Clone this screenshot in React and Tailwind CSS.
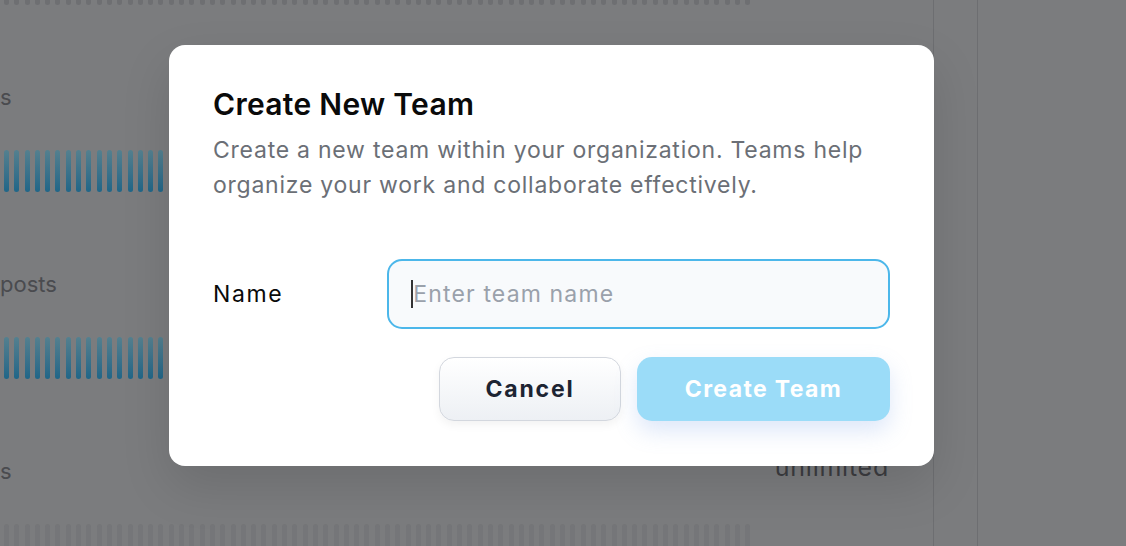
import React from 'react';

const BAR_COUNT = 75;

const BarRow = ({ tone }) => {
  const bars = Array.from({ length: BAR_COUNT });
  const barClass =
    tone === 'blue'
      ? 'w-[5px] shrink-0 rounded-full bg-gradient-to-b from-[#54808f] to-[#1f6688]'
      : tone === 'dark'
        ? 'w-[5px] shrink-0 rounded-full bg-[#6e6f72]'
        : 'w-[5px] shrink-0 rounded-full bg-[#757679]';
  return (
    <div className="flex h-[42px] w-[752px] shrink-0 gap-[5.3px] overflow-hidden pl-[4px]">
      {bars.map((_, i) => (
        <div key={i} className={barClass} />
      ))}
    </div>
  );
};

const UsageSection = ({ label, value, tone }) => (
  <div className="flex shrink-0 flex-col">
    <div className="flex h-[145px] w-[889px] shrink-0 items-center justify-between pt-[40px] text-[22px]">
      <span className="text-[#4a4b4f]">{label}</span>
      {value && (
        <span className="mb-[8px] text-[25px] tracking-[0.03em] text-[#3c3d41]">{value}</span>
      )}
    </div>
    <BarRow tone={tone} />
  </div>
);

export default function App() {
  return (
    <div
      className="relative h-[546px] w-[1126px] overflow-hidden bg-[#7b7c7e]"
      style={{ fontFamily: 'Inter, "Liberation Sans", sans-serif' }}
    >
      {/* page behind the modal */}
      <div className="flex h-full">
        <div className="-mt-[37px] flex w-[933px] shrink-0 flex-col">
          <BarRow tone="dark" />
          <UsageSection label="s" tone="blue" />
          <UsageSection label="posts" tone="blue" />
          <UsageSection label="s" value="unlimited" tone="gray" />
        </div>
        <div className="w-[44px] border-l border-[#6d6e71]" />
        <div className="flex-1 border-l border-[#6d6e71]" />
      </div>

      {/* modal */}
      <div className="absolute inset-0 pl-[169px] pt-[45px]">
        <div className="w-[765px] rounded-[16px] bg-white px-[44px] pt-[40px] pb-[45px] shadow-[0_20px_50px_rgba(0,0,0,0.12)]">
          <h2 className="text-[30px] font-semibold leading-[38px] tracking-[0.01em] text-[#0a0a0a]">
            Create New Team
          </h2>
          <p className="mt-[10px] text-[23px] leading-[35px] tracking-[0.033em] text-[#6b6f76]">
            Create a new team within your organization. Teams help organize your work and
            collaborate effectively.
          </p>

          <div className="mt-[56px] grid grid-cols-4 items-center gap-5">
            <label className="text-[23px] tracking-[0.07em] text-[#0a0a0a]">Name</label>
            <div className="col-span-3 flex h-[70px] items-center rounded-[15px] border-2 border-[#4cb7ea] bg-[#f8fafc] pl-[22px]">
              <span className="h-[28px] w-[2px] bg-[#333]" />
              <span className="text-[23px] tracking-[0.05em] text-[#9aa1ab]">Enter team name</span>
            </div>
          </div>

          <div className="mt-[28px] flex justify-end gap-4">
            <button className="h-[64px] w-[182px] rounded-[15px] border border-[#d3d7de] bg-gradient-to-b from-white to-[#edf0f4] text-[23px] font-bold tracking-[0.08em] text-[#1d2432] shadow-[0_4px_10px_rgba(0,0,0,0.05)]">
              Cancel
            </button>
            <button className="h-[64px] w-[253px] rounded-[15px] bg-[#9bdcf8] text-[23px] font-bold tracking-[0.06em] text-white shadow-[0_10px_22px_rgba(120,160,230,0.25)]">
              Create Team
            </button>
          </div>
        </div>
      </div>
    </div>
  );
}
